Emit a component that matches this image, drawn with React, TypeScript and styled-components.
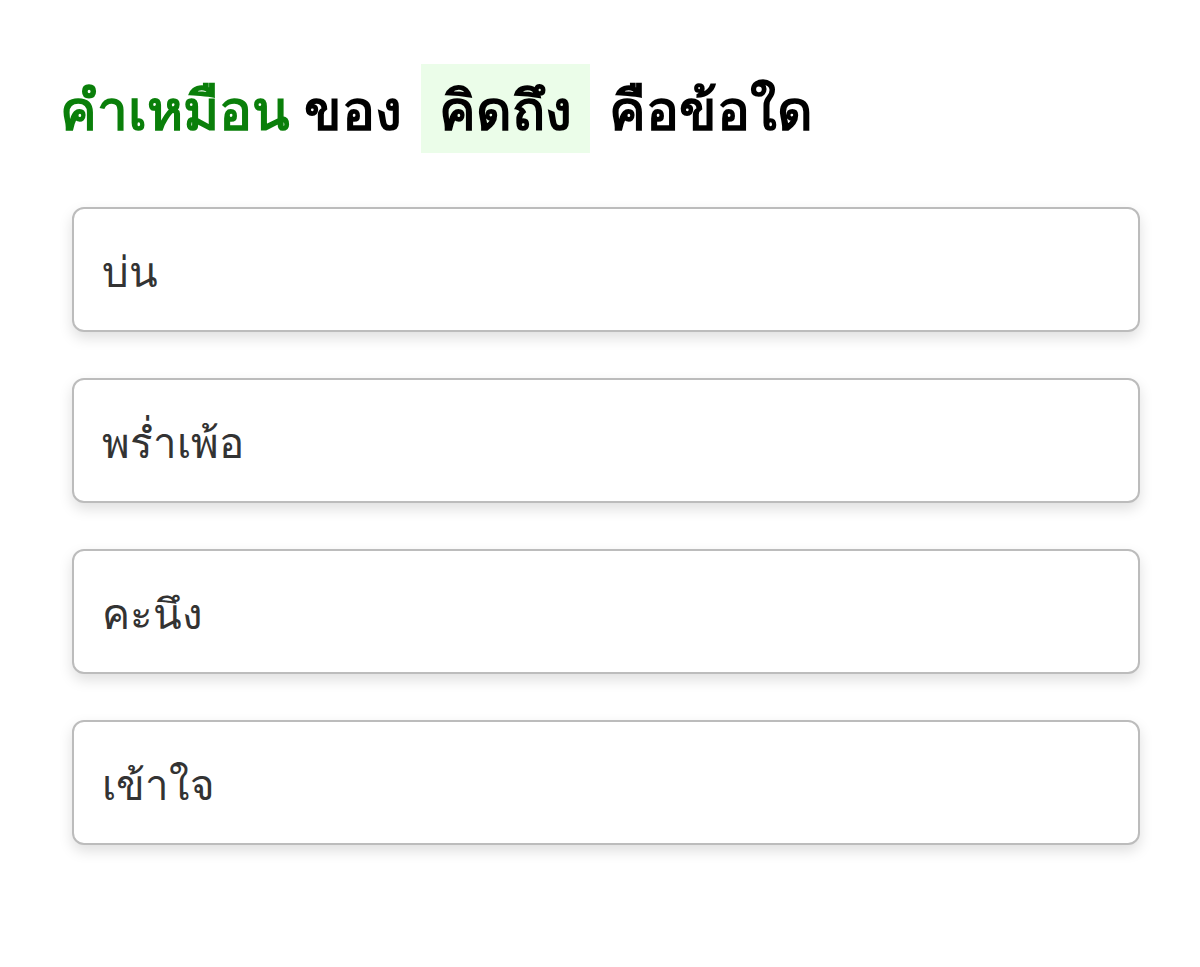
import React from "react";
import styled, { createGlobalStyle } from "styled-components";

const Global = createGlobalStyle`
  html, body { margin: 0; padding: 0; background: #fff; }
  body { font-family: "Noto Sans", "DejaVu Sans", sans-serif; }
`;

const Page = styled.div`
  padding: 64px 60px 60px 60px;
`;

const Title = styled.h1`
  margin: 0;
  display: flex;
  align-items: center;
  font-size: 55px;
  font-weight: 700;
  line-height: 89px;
  color: #000;
  white-space: pre;
`;

const Green = styled.span`
  color: #0a7f0a;
`;

const Highlight = styled.span`
  background: #ebfde9;
  padding: 0 18px;
  margin: 0 19px;
`;

const List = styled.div`
  display: flex;
  flex-direction: column;
  gap: 46px;
  margin: 54px 0 0 12px;
`;

const Card = styled.div`
  box-sizing: border-box;
  height: 125px;
  border: 2px solid #bcbcbc;
  border-radius: 12px;
  background: #fff;
  box-shadow: 0 6px 14px rgba(0, 0, 0, 0.13);
  display: flex;
  align-items: center;
  padding: 4px 0 0 28px;
  font-size: 42px;
  color: #333;
`;

const options = ["บ่น", "พร่ำเพ้อ", "คะนึง", "เข้าใจ"];

export default function App() {
  return (
    <Page>
      <Global />
      <Title>
        <Green>คำเหมือน</Green>
        {" ของ"}
        <Highlight>คิดถึง</Highlight>
        คือข้อใด
      </Title>
      <List>
        {options.map((o) => (
          <Card key={o}>{o}</Card>
        ))}
      </List>
    </Page>
  );
}
